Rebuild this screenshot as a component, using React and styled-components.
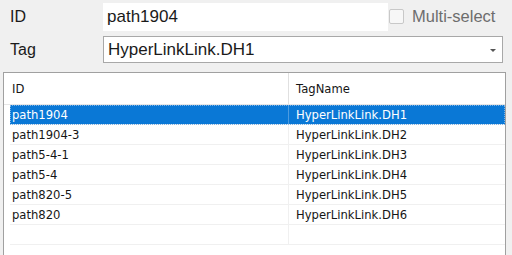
import React from 'react';
import styled, { createGlobalStyle } from 'styled-components';

const GlobalStyle = createGlobalStyle`
  html, body {
    margin: 0;
    padding: 0;
    background: #f0f0f0;
  }
  body {
    width: 512px;
    height: 255px;
    overflow: hidden;
  }
`;

const Panel = styled.div`
  display: flex;
  flex-direction: column;
  padding: 3px 7px 0 3px;
  font-family: "Liberation Sans", Arial, sans-serif;
  color: #000;
`;

const FormRow = styled.div`
  display: flex;
  align-items: center;
  height: ${p => p.$height}px;
  margin-bottom: ${p => p.$gap || 0}px;
`;

const Label = styled.div`
  width: 93px;
  padding-left: 7px;
  font-size: 16px;
  color: #1a1a1a;
`;

const TextInput = styled.div`
  box-sizing: border-box;
  width: 285px;
  height: 100%;
  background: #fff;
  display: flex;
  align-items: center;
  padding-left: 4px;
  font-size: 17px;
  color: #1a1a1a;
`;

const CheckWrap = styled.label`
  display: flex;
  align-items: center;
  margin-left: 1px;
  margin-top: -2px;
  font-size: 16.5px;
  color: #6d6d6d;
`;

const CheckBox = styled.span`
  box-sizing: border-box;
  width: 15px;
  height: 15px;
  border: 1px solid #c8c8c8;
  border-radius: 2px;
  background: #f7f7f7;
  margin-right: 8px;
`;

const Combo = styled.div`
  box-sizing: border-box;
  width: 400px;
  height: 100%;
  background: #fff;
  border: 1px solid #a8a8a8;
  display: flex;
  align-items: center;
  justify-content: space-between;
  padding: 0 6px 0 4px;
  font-size: 17px;
  color: #1a1a1a;
`;

const Arrow = styled.span`
  width: 0;
  height: 0;
  border-left: 3px solid transparent;
  border-right: 3px solid transparent;
  border-top: 3px solid #555;
  margin-top: 1px;
`;

const Table = styled.div`
  box-sizing: border-box;
  margin-top: 9px;
  width: 503px;
  height: 190px;
  background: #fff;
  border: 1px solid #a0a0a0;
  border-bottom: none;
  font-family: "DejaVu Sans", Tahoma, sans-serif;
  font-size: 11.6px;
  color: #151515;
`;

const Header = styled.div`
  display: grid;
  grid-template-columns: 284px 1fr;
  height: 31px;
  border-bottom: 1px solid #e6e6e6;
`;

const HeadCell = styled.div`
  display: flex;
  align-items: center;
  padding-left: ${p => p.$first ? 8 : 7}px;
  border-left: ${p => p.$first ? 'none' : '1px solid #e0e0e0'};
`;

const Body = styled.div`
  padding-left: 6px;
`;

const Row = styled.div`
  display: grid;
  grid-template-columns: 278px 1fr;
  height: 20px;
  box-sizing: border-box;
  border-bottom: 1px solid #f0f0f0;
  background: ${p => p.$selected ? '#0a78d6' : 'transparent'};
  color: ${p => p.$selected ? '#fff' : '#151515'};
  outline: ${p => p.$selected ? '1px dotted #7fb4e6' : 'none'};
  outline-offset: -1px;
`;

const Cell = styled.div`
  display: flex;
  align-items: center;
  padding-left: ${p => p.$first ? 2 : 7}px;
  border-left: ${p => p.$first ? 'none' : `1px solid ${p.$selected ? '#4c9be0' : '#f0f0f0'}`};
  white-space: nowrap;
`;

const rows = [
  { id: 'path1904', tag: 'HyperLinkLink.DH1' },
  { id: 'path1904-3', tag: 'HyperLinkLink.DH2' },
  { id: 'path5-4-1', tag: 'HyperLinkLink.DH3' },
  { id: 'path5-4', tag: 'HyperLinkLink.DH4' },
  { id: 'path820-5', tag: 'HyperLinkLink.DH5' },
  { id: 'path820', tag: 'HyperLinkLink.DH6' },
  { id: '', tag: '' },
];

const App = () => (
  <>
    <GlobalStyle />
    <Panel>
      <FormRow $height={28} $gap={5}>
        <Label>ID</Label>
        <TextInput>path1904</TextInput>
        <CheckWrap>
          <CheckBox />
          Multi-select
        </CheckWrap>
      </FormRow>
      <FormRow $height={27}>
        <Label>Tag</Label>
        <Combo>
          HyperLinkLink.DH1
          <Arrow />
        </Combo>
      </FormRow>
      <Table>
        <Header>
          <HeadCell $first>ID</HeadCell>
          <HeadCell>TagName</HeadCell>
        </Header>
        <Body>
          {rows.map((r, i) => (
            <Row key={i} $selected={i === 0}>
              <Cell $first>{r.id}</Cell>
              <Cell $selected={i === 0}>{r.tag}</Cell>
            </Row>
          ))}
        </Body>
      </Table>
    </Panel>
  </>
);

export default App;
